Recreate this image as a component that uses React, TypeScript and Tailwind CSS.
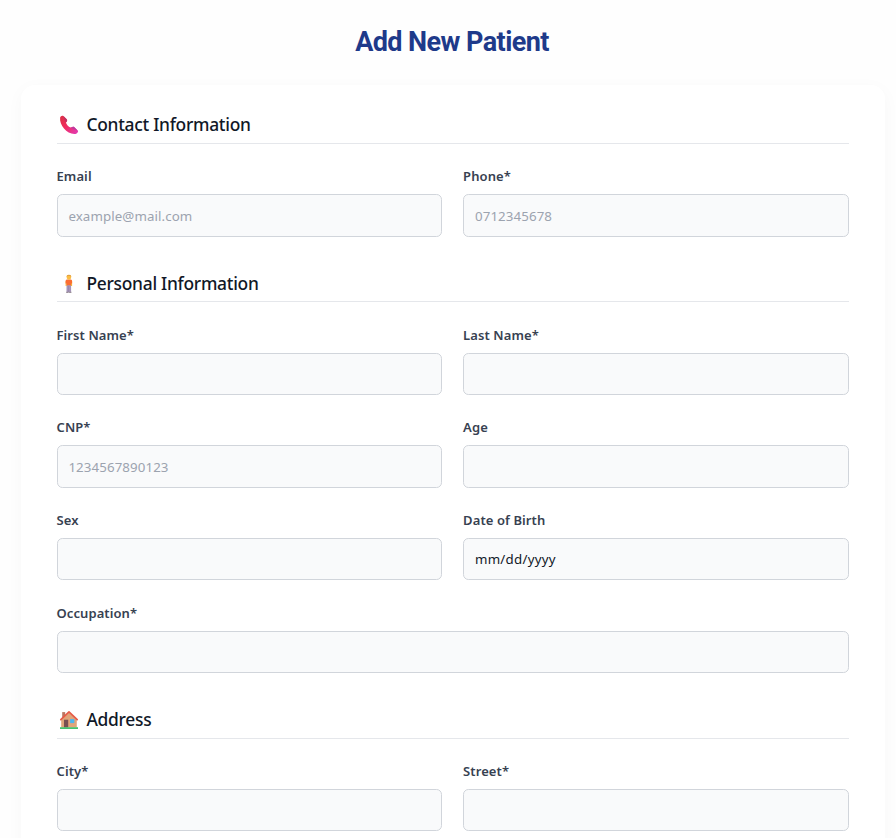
import type { ReactNode } from "react";

type FieldProps = { label: string; placeholder?: string; value?: string; wide?: boolean };

function Field({ label, placeholder = "", value, wide = false }: FieldProps) {
  const id = label.replace(/\W/g, "").toLowerCase();
  return (
    <div className={wide ? "col-span-2" : ""}>
      <label htmlFor={id} className="-ml-[0.3px] block h-[18px] text-[13px] leading-[18px] font-semibold tracking-[0.09px] text-[#374151]">
        {label}
      </label>
      <input
        id={id}
        type="text"
        defaultValue={value}
        placeholder={placeholder}
        className={`mt-[8.9px] block h-[42.42px] w-full rounded-[5.4px] border border-[#d1d5db] bg-[#f9fafb] px-[10.6px] pt-[0.1px] text-[13.3px] text-[#111827] outline-none placeholder:text-[#9ca3af] ${value ? "tracking-[0.26px]" : "tracking-[0.1px]"}`}
      />
    </div>
  );
}

function Section({ icon, title, children }: { icon: ReactNode; title: string; children: ReactNode }) {
  return (
    <section className="mb-[36.7px]">
      <h2 className="flex h-[29px] items-start gap-[7.5px] border-b border-[#e5e7eb] pl-[2.2px] text-[17.4px] leading-[18px] font-medium tracking-[-0.28px] text-[#111827]">
        {icon}
        <span className="pt-[0.17px]">{title}</span>
      </h2>
      <div className="mt-[23.45px] grid grid-cols-2 gap-x-[21px] gap-y-[23.34px]">{children}</div>
    </section>
  );
}

function PhoneIcon() {
  return (
    <svg className="h-5 w-5 shrink-0" viewBox="0 0 20 20">
      <defs>
        <linearGradient id="phone" gradientUnits="userSpaceOnUse" x1="2" y1="3" x2="18" y2="18">
          <stop offset="0" stopColor="#e02f48" />
          <stop offset=".4" stopColor="#f02c5c" />
          <stop offset="1" stopColor="#e339b0" />
        </linearGradient>
      </defs>
      <path fill="url(#phone)" d="M1.1 2.6C1.5 1.1 3.2.1 4.4 1.1L7.7 4.3C8.7 5.4 7.9 6.5 6.9 7.5C7.4 9.6 9.8 12.1 12 12.6C13.2 11.6 14.4 11.4 15.4 12.2L18.9 15.8C19.7 16.9 18 18.6 16.5 18.9C8.4 19.8.2 10.8 1.1 2.6Z" />
      <path fill="#bd3aa0" d="M12 12.6C13.2 11.6 14.4 11.4 15.4 12.2L18.9 15.8C17.5 15.5 14.2 14.2 12 12.6Z" />
      <path fill="#c13263" d="M4.4 1.1L7.7 4.3C8.7 5.4 7.9 6.5 6.9 7.5C5.5 5.5 4.6 3.2 4.4 1.1Z" />
    </svg>
  );
}

function PersonIcon() {
  return (
    <svg className="mt-[0.6px] h-5 w-5 shrink-0" viewBox="0 0 20 20">
      <path fill="#a594b8" d="M7.5 10H12.1V18.3H7.5Z" />
      <path fill="#8c7c9f" d="M9.6 12H10V18.3H9.6Z" />
      <path fill="#9b9099" d="M7.2 17.7H9.5V19H7.2ZM10.1 17.7H12.4V19H10.1Z" />
      <path fill="#f6b73e" d="M6.6 7.2H7.8V12H6.6ZM11.9 7.2H13.1V12H11.9Z" />
      <path fill="#fb6d32" d="M7.8 5.4H11.9Q13.1 5.4 13.1 7V9.5H12.1V11.3H7.6V9.5H6.6V7Q6.6 5.4 7.8 5.4Z" />
      <path fill="#fbbd42" d="M7.7 2.8Q7.7 1 9.9 1T12.1 2.8V4Q11.7 5.6 9.9 5.8Q8.1 5.6 7.7 4Z" />
      <path fill="#e3a03e" d="M7.6 3V2Q8 .8 9.9.8T12.2 2V3L11 2.1H8.6Z" />
    </svg>
  );
}

function HouseIcon() {
  return (
    <svg className="h-5 w-5 shrink-0" viewBox="0 0 20 20">
      <path fill="#b97862" d="M3.2 2.1H6.2V8H3.2Z" />
      <path fill="#e0a57a" d="M2.2 9.5L10 2.5L17.8 9.5V17.5H2.2Z" />
      <path fill="none" stroke="#e65b48" strokeWidth="1.7" strokeLinecap="round" strokeLinejoin="round" d="M1.8 9.6L10 1.9L18.2 9.6" />
      <path fill="#795052" d="M5 9.7H9.2V17.5H5Z" />
      <path fill="#4eb5ef" d="M11.1 9.1H15.3V13.1H11.1Z" />
      <path fill="#45c36f" d="M1 17.2H19V19H1Z" />
    </svg>
  );
}

export default function App() {
  return (
    <main className="h-[838px] overflow-hidden bg-[#fefefe] pl-[21px] pr-[11px] font-['Noto_Sans','Open_Sans',sans-serif]">
      <h1 className="pt-[25px] pr-[2px] text-center font-[Roboto,sans-serif] text-[27px] leading-[34px] font-bold tracking-[-0.57px] text-[#1e3a8a]">
        Add New Patient
      </h1>
      <div className="mt-[26px] h-[900px] rounded-[14px] bg-white pl-[35.8px] pr-[36px] pt-[30px] shadow-[0_4px_18px_rgba(0,0,0,0.03)]">
        <Section icon={<PhoneIcon />} title="Contact Information">
          <Field label="Email" placeholder="example@mail.com" />
          <Field label="Phone*" placeholder="0712345678" />
        </Section>
        <Section icon={<PersonIcon />} title="Personal Information">
          <Field label="First Name*" />
          <Field label="Last Name*" />
          <Field label="CNP*" placeholder="1234567890123" />
          <Field label="Age" />
          <Field label="Sex" />
          <Field label="Date of Birth" value="mm/dd/yyyy" />
          <Field label="Occupation*" wide />
        </Section>
        <Section icon={<HouseIcon />} title="Address">
          <Field label="City*" />
          <Field label="Street*" />
        </Section>
      </div>
    </main>
  );
}
